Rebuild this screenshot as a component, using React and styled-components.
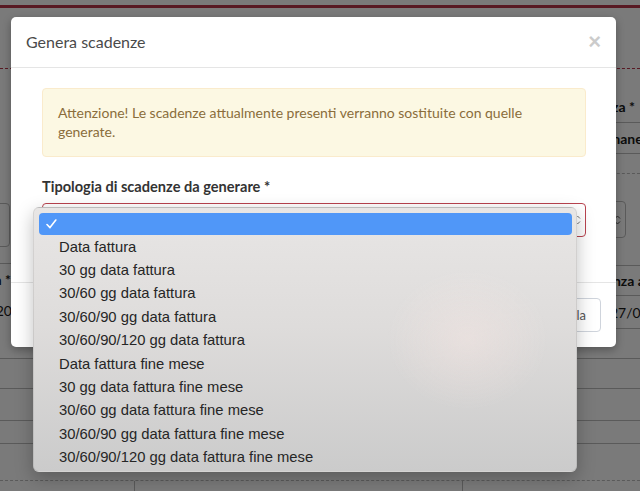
import React from 'react';
import styled, { createGlobalStyle } from 'styled-components';

const GlobalStyle = createGlobalStyle`
  html, body {
    margin: 0;
    padding: 0;
  }
  body {
    width: 640px;
    height: 491px;
    overflow: hidden;
    background: #fff;
    font-family: Lato, "Open Sans", sans-serif;
  }
`;

/* ---- page behind the modal ---- */

const Page = styled.div`
  position: relative;
  width: 640px;
  height: 491px;
  overflow: hidden;
  background: #fff;
  color: #1a1a1a;
  font-size: 14px;
`;

const TopBar = styled.div`
  height: 5px;
  border-bottom: 3px solid #b8364a;
`;

const PageHeader = styled.div`
  height: 60px;
  border-bottom: 1px dashed #b8364a;
`;

const FormArea = styled.div`
  display: flex;
  justify-content: space-between;
`;

const Column = styled.div`
  width: ${(p) => p.$w}px;
  display: flex;
  flex-direction: column;
`;

const Cell = styled.div`
  box-sizing: border-box;
  height: ${(p) => p.$h}px;
  display: flex;
  align-items: center;
  justify-content: ${(p) => (p.$end ? 'flex-end' : 'flex-start')};
  padding-left: ${(p) => p.$pl || 0}px;
  padding-right: ${(p) => p.$pr || 0}px;
  border-bottom: ${(p) => (p.$line ? `1px ${p.$line} #bdbdbd` : 'none')};
  overflow: hidden;
  white-space: nowrap;
  font-weight: ${(p) => (p.$bold ? 700 : 400)};
`;

const BgInput = styled.div`
  box-sizing: border-box;
  height: ${(p) => p.$h}px;
  width: ${(p) => p.$w}px;
  margin-left: ${(p) => p.$ml}px;
  display: flex;
  align-items: center;
  justify-content: ${(p) => (p.$end ? 'flex-end' : 'flex-start')};
  padding: 0 4px;
  border: 1px solid #bdbdbd;
  border-radius: 4px;
  overflow: hidden;
  white-space: nowrap;
  color: #444;
`;

const TableRow = styled.div`
  box-sizing: border-box;
  height: ${(p) => p.$h}px;
  border-bottom: 1px ${(p) => p.$line || 'solid'} #bdbdbd;
`;

const SplitRow = styled.div`
  display: grid;
  grid-template-columns: 135px 328px 1fr;
  height: 20px;
`;

const SplitCell = styled.div`
  border-right: 1px solid #bdbdbd;
  &:last-child {
    border-right: none;
  }
`;

/* ---- modal ---- */

const Overlay = styled.div`
  position: absolute;
  inset: 0;
  padding: 17px 0 0 11px;
  background: rgba(0, 0, 0, 0.52);
`;

const Modal = styled.div`
  width: 605px;
  background: #fff;
  border-radius: 5px;
  box-shadow: 0 3px 9px rgba(0, 0, 0, 0.3);
  color: #333;
`;

const ModalHeader = styled.div`
  display: flex;
  align-items: center;
  justify-content: space-between;
  padding: 15px;
  border-bottom: 1px solid #e5e5e5;
`;

const Title = styled.h4`
  margin: 0;
  font-size: 16px;
  font-weight: 400;
  line-height: 20px;
  color: #4a4a4a;
`;

const Close = styled.button`
  padding: 0;
  border: 0;
  background: none;
  font-family: "Liberation Sans", Arial, sans-serif;
  font-size: 22px;
  font-weight: 700;
  line-height: 20px;
  color: #000;
  opacity: 0.2;
`;

const ModalBody = styled.div`
  padding: 20px 30px 45px 31px;
`;

const Alert = styled.div`
  margin-bottom: 20px;
  padding: 15px;
  background: #fcf8e3;
  border: 1px solid #faebcc;
  border-radius: 4px;
  color: #8a6d3b;
  font-size: 14px;
  line-height: 18.5px;
`;

const Label = styled.label`
  display: block;
  margin-bottom: 6px;
  font-size: 14.6px;
  font-weight: 700;
  line-height: 20px;
  color: #333;
`;

const SelectWrap = styled.div`
  position: relative;
`;

const SelectBox = styled.div`
  box-sizing: border-box;
  height: 34px;
  display: flex;
  align-items: center;
  justify-content: flex-end;
  padding-right: 4px;
  border: 1px solid #b9434f;
  border-radius: 4px;
  background: #fff;
`;

const Popup = styled.ul`
  position: absolute;
  top: 4px;
  left: -9px;
  width: 544px;
  box-sizing: border-box;
  margin: 0;
  padding: 5px 4px 2px 5px;
  list-style: none;
  border-radius: 6px;
  border: 1px solid rgba(0, 0, 0, 0.08);
  background:
    radial-gradient(ellipse 80px 70px at 80% 50%, rgba(250, 232, 228, 0.4), rgba(250, 232, 228, 0)),
    linear-gradient(180deg, #e8e6e5 0%, #dedcdb 45%, #cbcbcb 100%);
  box-shadow: 0 6px 18px rgba(0, 0, 0, 0.25);
  font-family: "Liberation Sans", Arial, sans-serif;
  font-size: 14.8px;
  color: #262626;
`;

const Option = styled.li`
  box-sizing: border-box;
  height: ${(p) => (p.$selected ? 22 : 23.4)}px;
  display: flex;
  align-items: center;
  padding-left: ${(p) => (p.$selected ? 7 : 20)}px;
  border-radius: 4px;
  background: ${(p) => (p.$selected ? '#5097f8' : 'transparent')};
  white-space: nowrap;
`;

const ModalFooter = styled.div`
  display: flex;
  justify-content: flex-end;
  gap: 5px;
  padding: 15px;
  border-top: 1px solid #e5e5e5;
`;

const Button = styled.button`
  height: 34px;
  padding: 6px 14px 6px 12px;
  font-family: Lato, sans-serif;
  font-size: 13px;
  border-radius: 4px;
  border: 1px solid ${(p) => (p.$primary ? '#2e6da4' : '#cfd4dc')};
  background: ${(p) => (p.$primary ? '#337ab7' : '#fff')};
  color: ${(p) => (p.$primary ? '#fff' : '#555')};
`;

const options = [
  'Data fattura',
  '30 gg data fattura',
  '30/60 gg data fattura',
  '30/60/90 gg data fattura',
  '30/60/90/120 gg data fattura',
  'Data fattura fine mese',
  '30 gg data fattura fine mese',
  '30/60 gg data fattura fine mese',
  '30/60/90 gg data fattura fine mese',
  '30/60/90/120 gg data fattura fine mese',
];

function Check() {
  return (
    <svg width="11" height="10" viewBox="0 0 11 10">
      <polyline points="1,5.5 4,8.6 9.8,1" fill="none" stroke="#fff" strokeWidth="1.6" strokeLinecap="round" strokeLinejoin="round" />
    </svg>
  );
}

function Chevrons({ color }) {
  return (
    <svg width="7" height="12" viewBox="0 0 7 12">
      <polyline points="1,4.5 3.5,2 6,4.5" fill="none" stroke={color} strokeWidth="1" />
      <polyline points="1,7.5 3.5,10 6,7.5" fill="none" stroke={color} strokeWidth="1" />
    </svg>
  );
}

function BackgroundPage() {
  return (
    <>
      <TopBar />
      <PageHeader />
      <FormArea>
        <Column $w={12}>
          <Cell $h={134} />
          <BgInput $h={44} $w={120} $ml={-110}>Contanti</BgInput>
          <Cell $h={17} $line="solid" />
          <Cell $h={30} $end $bold $pr={1}>Data *</Cell>
          <Cell $h={33} $end $pr={-14}>01/03/2020</Cell>
        </Column>
        <Column $w={220}>
          <Cell $h={21} />
          <Cell $h={33} $line="solid" $end $bold $pr={5}>Data scadenza *</Cell>
          <Cell $h={31} $line="solid" $bold $pl={176}>Rimanenza</Cell>
          <Cell $h={20} $line="dashed" />
          <Cell $h={92} $line="solid">
            <BgInput $h={37} $w={200} $ml={6} $end>
              <Chevrons color="#555" />
            </BgInput>
          </Cell>
          <Cell $h={30} $line="solid" $bold $pl={156}>Scadenza a</Cell>
          <Cell $h={33} $line="solid" $pl={190}>27/03/2020</Cell>
        </Column>
      </FormArea>
      <TableRow $h={30} />
      <TableRow $h={30} />
      <TableRow $h={32} />
      <TableRow $h={23} />
      <TableRow $h={37} $line="dashed" />
      <SplitRow>
        <SplitCell />
        <SplitCell />
        <SplitCell />
      </SplitRow>
    </>
  );
}

export default function App() {
  return (
    <Page>
      <GlobalStyle />
      <BackgroundPage />
      <Overlay>
        <Modal>
          <ModalHeader>
            <Title>Genera scadenze</Title>
            <Close type="button">×</Close>
          </ModalHeader>
          <ModalBody>
            <Alert>
              Attenzione! Le scadenze attualmente presenti verranno sostituite con quelle generate.
            </Alert>
            <Label>Tipologia di scadenze da generare *</Label>
            <SelectWrap>
              <SelectBox>
                <Chevrons color="#777" />
              </SelectBox>
              <Popup>
                <Option $selected>
                  <Check />
                </Option>
                {options.map((o) => (
                  <Option key={o}>{o}</Option>
                ))}
              </Popup>
            </SelectWrap>
          </ModalBody>
          <ModalFooter>
            <Button $primary type="button">Genera</Button>
            <Button type="button">Annulla</Button>
          </ModalFooter>
        </Modal>
      </Overlay>
    </Page>
  );
}
